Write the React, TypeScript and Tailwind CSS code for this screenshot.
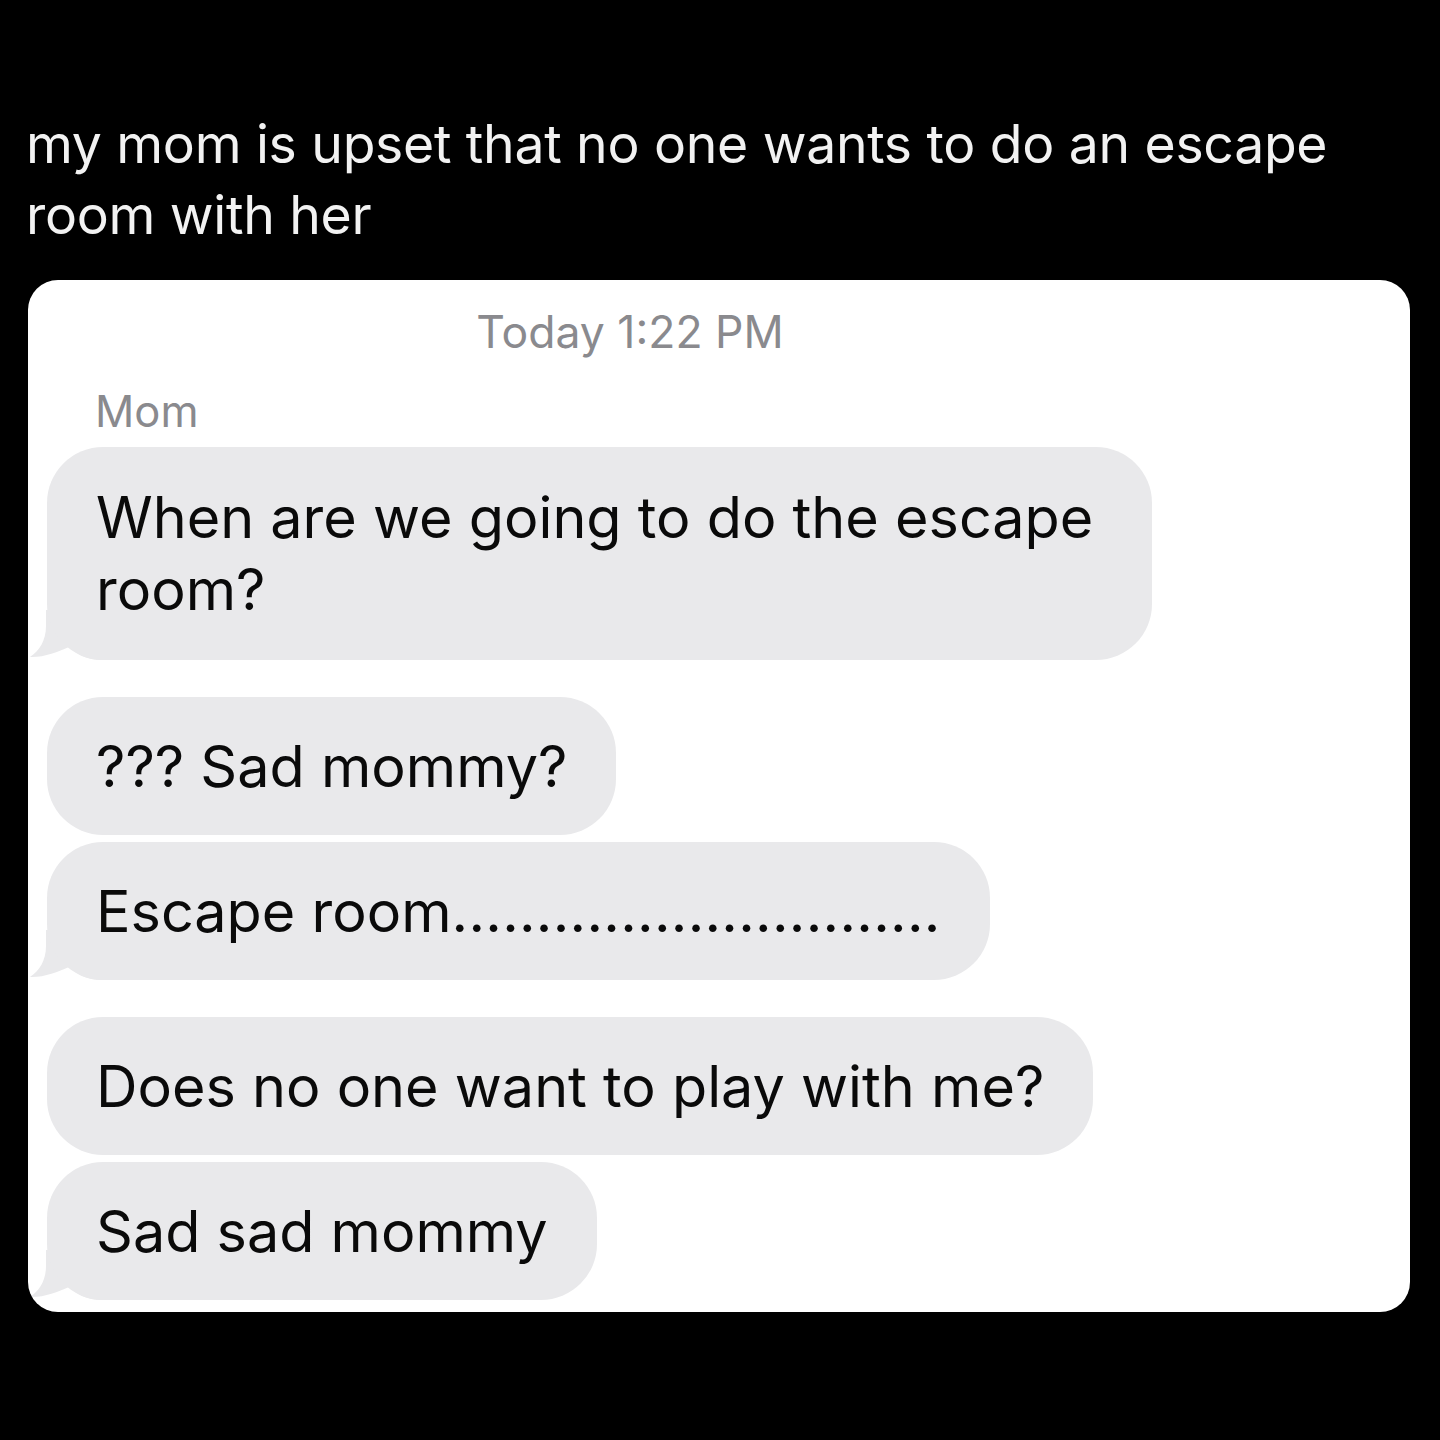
import React from "react";

type Msg = { text: string; dots?: string; tail?: boolean; width?: string; gap: string; pad?: string };

const MESSAGES: Msg[] = [
  { text: "When are we going to do the escape room?", tail: true, width: "w-[1105px]", gap: "mt-0", pad: "pt-[34px] pb-[35px]" },
  { text: "??? Sad mommy?", gap: "mt-[37px]" },
  { text: "Escape room", dots: ".............................", tail: true, gap: "mt-[7px]" },
  { text: "Does no one want to play with me?", gap: "mt-[37px]" },
  { text: "Sad sad mommy", tail: true, gap: "mt-[7px]" },
];

function Tail() {
  return (
    <svg
      className="absolute bottom-0 left-[-17px]"
      width="90"
      height="50"
      viewBox="0 0 90 50"
      aria-hidden
    >
      <path
        d="M16 0 L16 16 C16 31 9 41 0 47 C14 47.5 28 42 39 37 C47 44 56 50 72 50 L90 50 L90 0 Z"
        fill="#e9e9eb"
      />
    </svg>
  );
}

function Bubble({ msg }: { msg: Msg }) {
  return (
    <div className={`relative ${msg.gap} ${msg.width ?? "w-fit"}`}>
      {msg.tail && <Tail />}
      <div
        className={`relative rounded-[56px] bg-[#e9e9eb] ${msg.pad ?? "py-[33px]"} pl-[49px] pr-[49px] text-[57.5px] leading-[72px] text-[#0a0a0a]`}
      >
        {msg.text}
        {msg.dots && <span className="tracking-[0.3px]">{msg.dots}</span>}
      </div>
    </div>
  );
}

export default function App() {
  return (
    <div className="min-h-[1440px] w-[1440px] bg-black pt-[108px] font-['Inter',sans-serif]">
      <h1 className="w-[1390px] px-[26px] text-[53.5px] font-normal leading-[71px] tracking-[-0.3px] text-[#f2f2f2]">
        my mom is upset that no one wants to do an escape room with her
      </h1>

      <div className="ml-[28px] mt-[30px] h-[1032px] w-[1382px] overflow-hidden rounded-[30px] bg-white pt-[25px]">
        <p className="w-[1204px] text-center text-[44.5px] leading-[54px] text-[#8a8a8e]">
          Today 1:22 PM
        </p>
        <p className="mt-[26px] pl-[67px] text-[43.5px] leading-[52px] text-[#8a8a8e]">Mom</p>

        <div className="mt-[10px] pl-[19px]">
          {MESSAGES.map((m, i) => (
            <Bubble key={i} msg={m} />
          ))}
        </div>
      </div>
    </div>
  );
}
